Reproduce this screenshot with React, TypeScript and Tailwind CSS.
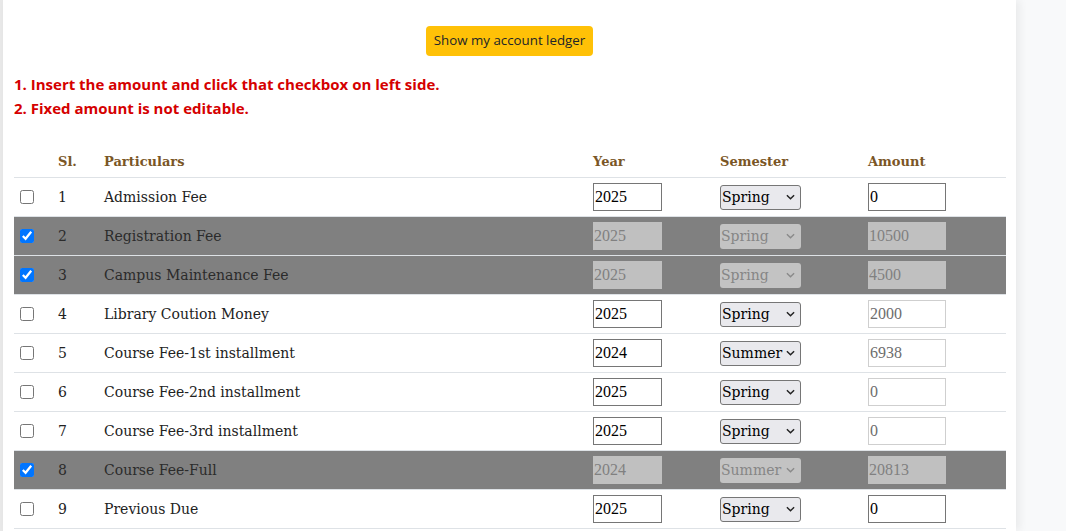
import React from 'react';

type Fee = {
  sl: number;
  name: string;
  year: string;
  semester: string;
  amount: string;
  checked: boolean;
  fixed: boolean; // amount not editable
};

const fees: Fee[] = [
  { sl: 1, name: 'Admission Fee', year: '2025', semester: 'Spring', amount: '0', checked: false, fixed: false },
  { sl: 2, name: 'Registration Fee', year: '2025', semester: 'Spring', amount: '10500', checked: true, fixed: true },
  { sl: 3, name: 'Campus Maintenance Fee', year: '2025', semester: 'Spring', amount: '4500', checked: true, fixed: true },
  { sl: 4, name: 'Library Coution Money', year: '2025', semester: 'Spring', amount: '2000', checked: false, fixed: true },
  { sl: 5, name: 'Course Fee-1st installment', year: '2024', semester: 'Summer', amount: '6938', checked: false, fixed: true },
  { sl: 6, name: 'Course Fee-2nd installment', year: '2025', semester: 'Spring', amount: '0', checked: false, fixed: true },
  { sl: 7, name: 'Course Fee-3rd installment', year: '2025', semester: 'Spring', amount: '0', checked: false, fixed: true },
  { sl: 8, name: 'Course Fee-Full', year: '2024', semester: 'Summer', amount: '20813', checked: true, fixed: true },
  { sl: 9, name: 'Previous Due', year: '2025', semester: 'Spring', amount: '0', checked: false, fixed: false },
];

const serif = "font-['DejaVu_Serif',serif]";
const valueFont = "font-['Liberation_Serif',serif]";
const cols = 'grid grid-cols-[44px_46px_489px_127px_148px_138px]';

const Chevron: React.FC<{ muted?: boolean }> = ({ muted }) => (
  <svg
    viewBox="0 0 10 6"
    className={`pointer-events-none absolute right-[6px] top-1/2 h-[6px] w-[9px] -translate-y-1/2 ${muted ? 'text-[#8a8a8a]' : 'text-[#222]'}`}
    fill="none"
    stroke="currentColor"
    strokeWidth="1.6"
  >
    <path d="M1 1l4 4 4-4" />
  </svg>
);

const FeeRow: React.FC<{ fee: Fee }> = ({ fee }) => {
  const locked = fee.checked;
  return (
    <div className={`${cols} h-[39px] items-center border-b border-[#dee2e6] ${locked ? 'bg-[#808080]' : 'bg-white'}`}>
      <div className="pl-[6px]">
        <input type="checkbox" defaultChecked={fee.checked} className="block h-[14px] w-[14px] accent-[#0075ff]" />
      </div>
      <div className={`${serif} text-[14px] ${locked ? 'text-[#2b2b2b]' : 'text-[#222]'}`}>{fee.sl}</div>
      <div className={`${serif} text-[14px] ${locked ? 'text-[#2b2b2b]' : 'text-[#222]'}`}>{fee.name}</div>
      <div>
        <input
          defaultValue={fee.year}
          disabled={locked}
          className={`${valueFont} block h-[28px] w-[69px] px-[1px] text-[16px] ${
            locked ? 'bg-[#c0c0c0] text-[#808080]' : 'border border-[#767676] bg-white text-black'
          }`}
        />
      </div>
      <div>
        <div className="relative w-[81px]">
          <select
            defaultValue={fee.semester}
            disabled={locked}
            className={`${serif} block h-[25px] w-[81px] appearance-none rounded-[3px] pl-[1px] text-[14px] ${
              locked ? 'bg-[#c3c3c3] text-[#868686]' : 'border border-[#767676] bg-[#e9e9ed] text-black'
            }`}
          >
            <option>Spring</option>
            <option>Summer</option>
            <option>Fall</option>
          </select>
          <Chevron muted={locked} />
        </div>
      </div>
      <div>
        <input
          defaultValue={fee.amount}
          disabled={locked}
          readOnly={fee.fixed && !locked}
          className={`${valueFont} block h-[28px] w-[78px] px-[1px] text-[16px] ${
            locked
              ? 'bg-[#c0c0c0] text-[#808080]'
              : fee.fixed
                ? 'border border-[#cfcfcf] bg-white text-[#6d6d6d]'
                : 'border border-[#767676] bg-white text-black'
          }`}
        />
      </div>
    </div>
  );
};

export default function App() {
  return (
    <div className="flex h-[531px] w-full overflow-hidden bg-[#f8f9fa]">
      <div className="w-[3px] shrink-0 bg-[#e8e8e8]" />
      <div className="relative w-[1013px] shrink-0 bg-white shadow-[4px_0_8px_rgba(0,0,0,0.06)]">
        <div className="flex justify-center pt-[26px]">
          <button className="h-[30px] rounded-[4px] bg-[#ffc107] px-[8px] font-['Open_Sans',sans-serif] text-[13.3px] text-[#212529]">
            Show my account ledger
          </button>
        </div>
        <div className="mt-[16px] pl-[11px] font-['Open_Sans',sans-serif] text-[15px] leading-[24px] font-bold text-[#d50000]">
          <div>1. Insert the amount and click that checkbox on left side.</div>
          <div>2. Fixed amount is not editable.</div>
        </div>
        <div className="mt-[22px] ml-[11px] w-[992px]">
          <div className={`${cols} h-[36px] items-center border-b border-[#dee2e6] pt-[4px] ${serif} text-[13px] font-bold text-[#7a5626]`}>
            <div />
            <div>Sl.</div>
            <div>Particulars</div>
            <div>Year</div>
            <div>Semester</div>
            <div>Amount</div>
          </div>
          {fees.map((fee) => (
            <FeeRow key={fee.sl} fee={fee} />
          ))}
        </div>
      </div>
    </div>
  );
}
